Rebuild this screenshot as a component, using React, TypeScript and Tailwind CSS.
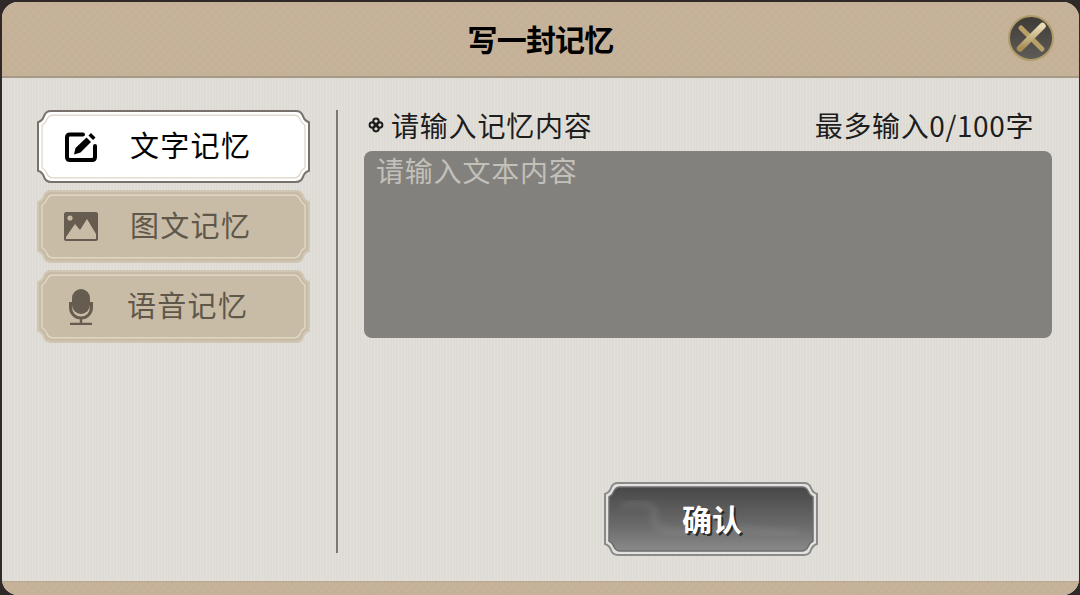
import React from 'react';

const cjk = "font-['Noto_Sans_CJK_SC','Noto_Sans_CJK_TC',sans-serif]";
const paper = 'bg-[repeating-linear-gradient(90deg,rgba(255,255,255,0.1)_0px,rgba(255,255,255,0.1)_1px,rgba(0,0,0,0.008)_1px,rgba(0,0,0,0.008)_3px)]';
const weave = 'bg-[repeating-linear-gradient(45deg,rgba(255,255,255,0.015)_0px,rgba(255,255,255,0.015)_2px,transparent_2px,transparent_6px),repeating-linear-gradient(-45deg,rgba(90,70,40,0.015)_0px,rgba(90,70,40,0.015)_2px,transparent_2px,transparent_6px)]';

function Plaque({ outer, inner, line }: { outer: string; inner: string; line: string }) {
  return (
    <svg className="absolute inset-0 h-full w-full" viewBox="0 0 272 72" preserveAspectRatio="none" fill="none">
      <path d="M14 1H258C262 1 264 3 265 6C266 9 268 11 271 12V60C268 61 266 63 265 66C264 69 262 71 258 71H14C10 71 8 69 7 66C6 63 4 61 1 60V12C4 11 6 9 7 6C8 3 10 1 14 1Z" fill={inner} stroke={outer} strokeWidth="2" />
      <path d="M16 5H256C259 5 261 7 262 9C263 12 265 14 267 15V57C265 58 263 60 262 63C261 65 259 67 256 67H16C13 67 11 65 10 63C9 60 7 58 5 57V15C7 14 9 12 10 9C11 7 13 5 16 5Z" stroke={line} strokeWidth="1.2" />
    </svg>
  );
}

function EditIcon({ color }: { color: string }) {
  return (
    <svg width="34" height="32" viewBox="0 0 34 32" fill="none">
      <path d="M19 3.5H6C4 3.5 3 4.5 3 6.500V26C3 28 4 29 6 29H28C30 29 31 28 31 26V15" stroke={color} strokeWidth="4" strokeLinecap="round" />
      <path d="M10 23.500L11.500 17L22.500 6.500L27 11L16.500 21.500Z" fill={color} />
      <path d="M24.500 4.500L27 2L31.500 6.500L29 9Z" fill={color} />
    </svg>
  );
}

function ImageIcon({ color }: { color: string }) {
  return (
    <svg width="34" height="29" viewBox="0 0 34 29">
      <path fillRule="evenodd" fill={color} d="M2 0H32C33 0 34 1 34 2V27C34 28 33 29 32 29H2C1 29 0 28 0 27V2C0 1 1 0 2 0ZM2 25V27H32V22L23 7L16 18L11 12Z" />
      <circle cx="6" cy="6" r="2.6" fill="#c8baa2" />
    </svg>
  );
}

function MicIcon({ color }: { color: string }) {
  return (
    <svg width="24" height="36" viewBox="0 0 24 36" fill="none">
      <rect x="3" y="0" width="18" height="25" rx="9" fill={color} />
      <path d="M1.500 13V18C1.500 24.500 6 29 12 29C18 29 22.500 24.500 22.500 18V13" stroke={color} strokeWidth="3" />
      <path d="M12 29V34M1 35H23" stroke={color} strokeWidth="2.400" />
    </svg>
  );
}

function TabButton({ label, active, icon, gap }: { label: string; active?: boolean; icon: React.ReactNode; gap: string }) {
  return (
    <div className="relative flex h-[73px] w-[273px] items-center">
      <Plaque
        outer={active ? '#77716a' : '#d0c6b4'}
        inner={active ? '#ffffff' : '#c8bca6'}
        line={active ? '#dcd3c5' : '#e6dcc8'}
      />
      <div className="relative ml-[21px] flex w-[46px] justify-center">{icon}</div>
      <span className={`relative ${gap} pb-[4px] text-[29px] leading-none tracking-[1.3px] ${active ? 'text-black' : 'text-[#5f574a]'}`}>{label}</span>
    </div>
  );
}

export default function App() {
  return (
    <div className={`relative flex h-[595px] w-[1080px] flex-col overflow-hidden bg-[#2f2a27] pl-[2px] pr-[1px] ${cjk}`}>
      <div className={`mt-[2px] flex h-[593px] flex-col overflow-hidden rounded-[16px] bg-[#e0ddd7] ${paper}`}>
        <header className={`relative flex h-[76px] shrink-0 items-center justify-center border-b-2 border-[#a69a87] bg-[#c5b299] ${weave}`}>
          <h1 className="pb-[2px] text-[30px] font-bold leading-none tracking-[-0.8px] text-black">写一封记忆</h1>
          <button className="absolute right-[25px] top-[13px] flex h-[46px] w-[46px] items-center justify-center rounded-full border-2 border-[#b09c68] bg-gradient-to-b from-[#3f3b37] to-[#5f5c58]">
            <svg width="36" height="36" viewBox="0 0 36 36" fill="none">
              <defs>
                <linearGradient id="cross" x1="0" y1="0" x2="0" y2="1">
                  <stop offset="0" stopColor="#e8dcb4" />
                  <stop offset="1" stopColor="#a88d55" />
                </linearGradient>
              </defs>
              <path d="M8 8L29 29" stroke="#b79f66" strokeWidth="5" strokeLinecap="round" />
              <path d="M29.500 6L7 28.500" stroke="url(#cross)" strokeWidth="6.500" strokeLinecap="round" />
            </svg>
          </button>
        </header>

        <div className="flex min-h-0 flex-1">
          <aside className="flex w-[336px] shrink-0 flex-col">
            <div className="mt-[32px] flex h-[443px] border-r-2 border-[#7b7872] pl-[35px]">
              <div className="flex flex-col gap-[7px]">
                <TabButton label="文字记忆" active gap="ml-[26px]" icon={<EditIcon color="#000000" />} />
                <TabButton label="图文记忆" gap="ml-[26px]" icon={<ImageIcon color="#665d50" />} />
                <TabButton label="语音记忆" gap="ml-[23px]" icon={<MicIcon color="#665d50" />} />
              </div>
            </div>
          </aside>

          <main className="flex min-w-0 flex-1 flex-col pl-[26px] pr-[27px]">
            <div className="mt-[31px] flex h-[42px] items-center justify-between pb-[10px]">
              <div className="flex items-center pl-[4px]">
                <svg width="16" height="16" viewBox="0 0 16 16" fill="none" stroke="#1d1d1d" strokeWidth="2">
                  <circle cx="8" cy="4.4" r="2.8" />
                  <circle cx="8" cy="11.6" r="2.8" />
                  <circle cx="4.4" cy="8" r="2.8" />
                  <circle cx="11.6" cy="8" r="2.8" />
                </svg>
                <span className="ml-[7px] text-[28px] leading-none tracking-[0.8px] text-[#1d1d1d]">请输入记忆内容</span>
              </div>
              <span className="pr-[18px] text-[28px] leading-none tracking-[0.6px] text-[#1d1d1d]">最多输入0/100字</span>
            </div>
            <div className="h-[187px] rounded-[8px] bg-[#82817d] px-[12px] pt-[3px] text-[28px] leading-[32px] tracking-[0.8px] text-[#c2c0b9]">
              请输入文本内容
            </div>
            <div className="mt-[144px] flex justify-center">
              <button className="relative ml-[6px] flex h-[74px] w-[214px] items-center justify-center">
                <svg className="absolute inset-0 h-full w-full" viewBox="0 0 214 74" fill="none">
                  <defs>
                    <linearGradient id="btn" x1="0" y1="0" x2="0" y2="1">
                      <stop offset="0" stopColor="#484848" />
                      <stop offset="0.6" stopColor="#6a6a6a" />
                      <stop offset="1" stopColor="#8a8a8a" />
                    </linearGradient>
                    <filter id="soft">
                      <feGaussianBlur stdDeviation="3.500" />
                    </filter>
                  </defs>
                  <path d="M14 1H200C204 1 206 3 207 6C208 9 210 11 213 12V62C210 63 208 65 207 68C206 71 204 73 200 73H14C10 73 8 71 7 68C6 65 4 63 1 62V12C4 11 6 9 7 6C8 3 10 1 14 1Z" fill="#e4e2de" stroke="#8a8a8a" strokeWidth="2" />
                  <path d="M16 5H198C201 5 203 7 204 9C205 12 207 14 209 15V59C207 60 205 62 204 65C203 67 201 69 198 69H16C13 69 11 67 10 65C9 62 7 60 5 59V15C7 14 9 12 10 9C11 7 13 5 16 5Z" fill="url(#btn)" stroke="#6e6e6e" strokeWidth="1.500" />
                  <path d="M18 24C40 18 56 24 50 36C46 46 70 54 104 48C140 42 170 54 194 50" stroke="#a0a0a0" strokeWidth="5" opacity="0.28" filter="url(#soft)" />
                </svg>
                <span className="relative ml-[2px] pb-[2px] text-[30px] font-bold leading-none text-white [text-shadow:2px_2px_0_#2b2b2b]">确认</span>
              </button>
            </div>
          </main>
        </div>

        <footer className={`h-[14px] shrink-0 border-t border-[#b8a88f] bg-[#c5b299] ${weave}`} />
      </div>
    </div>
  );
}
